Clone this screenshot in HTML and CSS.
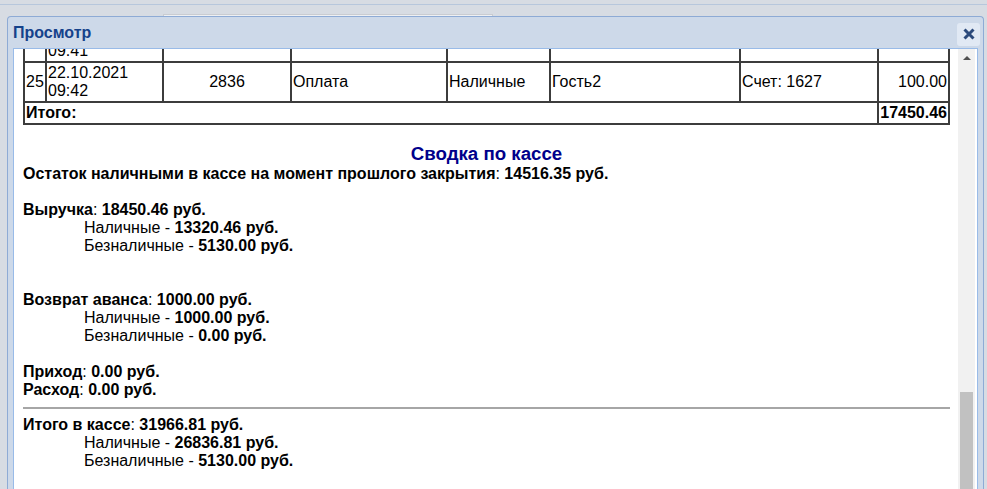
FILE: index.html
```html
<!DOCTYPE html>
<html lang="ru">

<head>
    <meta charset="UTF-8">
    <meta name="viewport" content="width=device-width, initial-scale=1.0">
    <title>Просмотр</title>

    <link rel="stylesheet" href="styles.css">
</head>

<body>
    <div class="desk">
        <div class="desk__top">
            <div class="desk__ghost"></div>
        </div>

        <div class="window">
            <div class="window__head">
                <span class="window__title">Просмотр</span>
                <button class="window__close" title="Закрыть">
                    <svg width="12" height="12" viewBox="0 0 12 12">
                        <path d="M1.5 1.5 L10.5 10.5 M10.5 1.5 L1.5 10.5" stroke="#2c4a7b" stroke-width="3" fill="none" />
                    </svg>
                </button>
            </div>

            <div class="window__body">
                <div class="report">
                    <table class="ops">
                        <colgroup>
                            <col style="width: 22px">
                            <col style="width: 117px">
                            <col style="width: 128px">
                            <col style="width: 156px">
                            <col style="width: 103px">
                            <col style="width: 190px">
                            <col style="width: 138px">
                            <col style="width: 71px">
                        </colgroup>
                        <tr class="ops__cut">
                            <td></td>
                            <td>09:41</td>
                            <td></td>
                            <td></td>
                            <td></td>
                            <td></td>
                            <td></td>
                            <td></td>
                        </tr>
                        <tr>
                            <td>25</td>
                            <td>22.10.2021<br>09:42</td>
                            <td class="c">2836</td>
                            <td>Оплата</td>
                            <td>Наличные</td>
                            <td>Гость2</td>
                            <td>Счет: 1627</td>
                            <td class="r">100.00</td>
                        </tr>
                        <tr>
                            <td colspan="7"><b>Итого:</b></td>
                            <td class="r"><b>17450.46</b></td>
                        </tr>
                    </table>

                    <div class="summary__title">Сводка по кассе</div>

                    <div class="summary">
                        <b>Остаток наличными в кассе на момент прошлого закрытия</b>: <b>14516.35 руб.</b><br>
                        <br>
                        <b>Выручка</b>: <b>18450.46 руб.</b><br>
                        <span class="sub">Наличные - <b>13320.46 руб.</b></span><br>
                        <span class="sub">Безналичные - <b>5130.00 руб.</b></span><br>
                        <br>
                        <br>
                        <b>Возврат аванса</b>: <b>1000.00 руб.</b><br>
                        <span class="sub">Наличные - <b>1000.00 руб.</b></span><br>
                        <span class="sub">Безналичные - <b>0.00 руб.</b></span><br>
                        <br>
                        <b>Приход</b>: <b>0.00 руб.</b><br>
                        <b>Расход</b>: <b>0.00 руб.</b>
                        <hr>
                        <b>Итого в кассе</b>: <b>31966.81 руб.</b><br>
                        <span class="sub">Наличные - <b>26836.81 руб.</b></span><br>
                        <span class="sub">Безналичные - <b>5130.00 руб.</b></span><br>
                    </div>
                </div>

                <div class="scrollbar">
                    <div class="scrollbar__up"></div>
                    <div class="scrollbar__thumb"></div>
                </div>
            </div>
        </div>
    </div>
</body>

</html>
```

FILE: styles.css
```css
body {
    margin: 0;
    overflow: hidden;
    font-family: "Liberation Sans", Arial, sans-serif;
    background-color: #d7dce3;
}

.desk {
    height: 489px;
    overflow: hidden;
}

.desk__top {
    box-sizing: border-box;
    border-top: 1px solid #b7c7dc;
    margin-top: 4px;
    height: 12px;
    padding: 9px 0 0 163px;
}

.desk__ghost {
    width: 330px;
    height: 3px;
    box-sizing: border-box;
    border: 1px solid #c9ccd1;
    border-bottom: 0;
    background: #eef0f3;
}

/* window */
.window {
    margin-left: 7px;
    width: 977px;
    height: 480px;
    box-sizing: border-box;
    border: 1px solid #8eabd5;
    border-bottom: 0;
    border-radius: 4px 4px 0 0;
    background: #cdd9e9;
    padding: 0 5px;
}

.window__head {
    height: 31px;
    display: flex;
    align-items: center;
    justify-content: space-between;
}

.window__title {
    font-size: 16px;
    font-weight: 700;
    color: #15428b;
    margin-top: 1px;
}

.window__close {
    width: 23px;
    height: 23px;
    margin-right: -2px;
    margin-top: 3px;
    border: 0;
    border-radius: 3px;
    background: #e1e9f4;
    padding: 0;
    display: flex;
    align-items: center;
    justify-content: center;
}

.window__body {
    display: flex;
    height: 460px;
    border: 1px solid #99bbe8;
    border-bottom: 0;
    background: #fff;
    padding-right: 2px;
}

.report {
    flex: 1;
    overflow: hidden;
    padding: 0 8px 0 9px;
}

/* operations table */
.ops {
    table-layout: fixed;
    border-collapse: separate;
    border-spacing: 0;
    border: 1px solid #3c3c3c;
    width: 926px;
    margin-top: -29px;
    font-size: 16px;
}

.ops td {
    border: 1px solid #3c3c3c;
    padding: 1px;
    vertical-align: middle;
    white-space: nowrap;
    overflow: hidden;
}

.ops__cut td {
    height: 37px;
    vertical-align: bottom;
}

.ops .c {
    text-align: center;
}

.ops .r {
    text-align: right;
}

/* summary */
.summary__title {
    margin-top: 18px;
    text-align: center;
    font-size: 18.7px;
    font-weight: 700;
    color: #00008b;
}

.summary {
    font-size: 16px;
    line-height: 18px;
}

.summary .sub {
    padding-left: 61px;
}

.summary hr {
    border: 0;
    border-top: 2px solid #a6a6a6;
    margin: 8px 0 7px;
}

/* scrollbar */
.scrollbar {
    width: 17px;
    background: #f1f1f1;
    position: relative;
}

.scrollbar__up {
    width: 0;
    height: 0;
    margin: 7px auto 0;
    border-left: 4px solid transparent;
    border-right: 4px solid transparent;
    border-bottom: 4px solid #505050;
}

.scrollbar__thumb {
    position: absolute;
    left: 2px;
    right: 2px;
    top: 343px;
    bottom: 0;
    background: #c1c1c1;
}
```
